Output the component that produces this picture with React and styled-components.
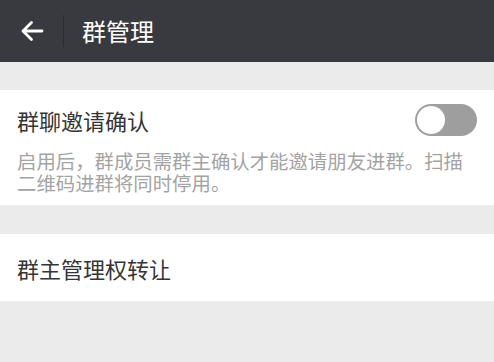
import React, { useState } from "react";
import styled, { createGlobalStyle } from "styled-components";

const GlobalStyle = createGlobalStyle`
  html, body {
    margin: 0;
    padding: 0;
    background: #ebebeb;
  }
  body {
    font-family: "Noto Sans CJK SC", "Noto Sans", sans-serif;
  }
`;

const Page = styled.div`
  min-height: 362px;
  background: #ebebeb;
`;

const Header = styled.header`
  height: 62px;
  background: #393a3f;
  display: flex;
  align-items: center;
`;

const BackButton = styled.button`
  width: 63px;
  height: 62px;
  border: 0;
  padding: 0;
  background: transparent;
  display: flex;
  align-items: center;
  justify-content: center;
  cursor: pointer;
`;

const Divider = styled.div`
  width: 1px;
  height: 32px;
  background: #2c2d31;
`;

const Title = styled.h1`
  margin: 0 0 0 18px;
  font-size: 24px;
  font-weight: 400;
  color: #ffffff;
  line-height: 1;
`;

const Section = styled.section`
  background: #ffffff;
  margin-top: ${(p) => p.$gap}px;
`;

const Row = styled.div`
  height: ${(p) => p.$height}px;
  padding: 0 17px;
  display: flex;
  align-items: center;
  justify-content: space-between;
  font-size: 22px;
  color: #353535;
`;

const Desc = styled.p`
  margin: 0;
  padding: 0 17px 11px;
  font-size: 19.4px;
  line-height: 22px;
  color: #a3a3a3;
`;

const Switch = styled.button`
  width: 62px;
  height: 32px;
  border: 0;
  padding: 2px;
  border-radius: 16px;
  background: ${(p) => (p.$on ? "#04be02" : "#9e9e9e")};
  display: flex;
  justify-content: ${(p) => (p.$on ? "flex-end" : "flex-start")};
  cursor: pointer;
`;

const Knob = styled.span`
  width: 28px;
  height: 28px;
  border-radius: 50%;
  background: #ffffff;
`;

function App() {
  const [invite, setInvite] = useState(false);

  return (
    <Page>
      <GlobalStyle />
      <Header>
        <BackButton aria-label="返回">
          <svg width="24" height="24" viewBox="0 0 24 24" fill="none">
            <path
              d="M22 12H3M11.5 3.5L3 12l8.5 8.5"
              stroke="#ffffff"
              strokeWidth="2.8"
              strokeLinecap="round"
              strokeLinejoin="round"
            />
          </svg>
        </BackButton>
        <Divider />
        <Title>群管理</Title>
      </Header>

      <Section $gap={28}>
        <Row $height={60}>
          <span>群聊邀请确认</span>
          <Switch $on={invite} onClick={() => setInvite(!invite)}>
            <Knob />
          </Switch>
        </Row>
        <Desc>启用后，群成员需群主确认才能邀请朋友进群。扫描二维码进群将同时停用。</Desc>
      </Section>

      <Section $gap={29}>
        <Row $height={67}>
          <span>群主管理权转让</span>
        </Row>
      </Section>
    </Page>
  );
}

export default App;
